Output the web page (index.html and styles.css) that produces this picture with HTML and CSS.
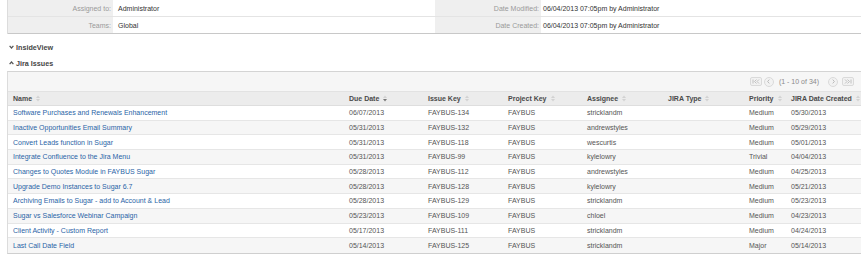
FILE: index.html
```html
<!DOCTYPE html>
<html>
<head>
<meta charset="utf-8">
<link rel="stylesheet" href="styles.css">
</head>
<body>
<div class="page">
  <div class="detail">
    <div class="drow">
      <div class="lbl">Assigned to:</div><div class="val">Administrator</div>
      <div class="lbl">Date Modified:</div><div class="val val2">06/04/2013 07:05pm by Administrator</div>
    </div>
    <div class="drow last">
      <div class="lbl">Teams:</div><div class="val">Global</div>
      <div class="lbl">Date Created:</div><div class="val val2">06/04/2013 07:05pm by Administrator</div>
    </div>
  </div>

  <div class="shead first"><svg class="chev" width="5" height="4" viewBox="0 0 5 4"><polyline points="0.6,0.8 2.5,3 4.4,0.8" fill="none" stroke="#555" stroke-width="1.2"/></svg>InsideView</div>
  <div class="shead"><svg class="chev" width="5" height="4" viewBox="0 0 5 4"><polyline points="0.6,3.2 2.5,1 4.4,3.2" fill="none" stroke="#555" stroke-width="1.2"/></svg>Jira Issues</div>

  <div class="jira">
    <div class="pager">
      <span class="pbtn sq"><svg width="8" height="5" viewBox="0 0 8 5"><path d="M1 0.5V4.5M4.5 0.5L2.5 2.5L4.5 4.5M7 0.5L5 2.5L7 4.5" fill="none" stroke="#bbb" stroke-width="0.9"/></svg></span>
      <span class="pbtn rd"><svg width="5" height="5" viewBox="0 0 5 5"><path d="M3.3 0.6L1.6 2.5L3.3 4.4" fill="none" stroke="#bbb" stroke-width="1"/></svg></span>
      <span class="ptext">(1 - 10 of 34)</span>
      <span class="pbtn rd next"><svg width="5" height="5" viewBox="0 0 5 5"><path d="M1.7 0.6L3.4 2.5L1.7 4.4" fill="none" stroke="#bbb" stroke-width="1"/></svg></span>
      <span class="pbtn sq"><svg width="8" height="5" viewBox="0 0 8 5"><path d="M7 0.5V4.5M3.5 0.5L5.5 2.5L3.5 4.5M1 0.5L3 2.5L1 4.5" fill="none" stroke="#bbb" stroke-width="0.9"/></svg></span>
    </div>

    <div class="trow thead">
      <div class="c">Name <svg class="sort" width="4" height="7" viewBox="0 0 4 7"><path d="M0 3L2 0.5L4 3Z" fill="#d2d2d2"/><path d="M0 4L2 6.5L4 4Z" fill="#d2d2d2"/></svg></div>
      <div class="c">Due Date <svg class="sort" width="4" height="7" viewBox="0 0 4 7"><path d="M0 3L2 0.5L4 3Z" fill="#d2d2d2"/><path d="M0 4L2 6.5L4 4Z" fill="#777"/></svg></div>
      <div class="c">Issue Key <svg class="sort" width="4" height="7" viewBox="0 0 4 7"><path d="M0 3L2 0.5L4 3Z" fill="#d2d2d2"/><path d="M0 4L2 6.5L4 4Z" fill="#d2d2d2"/></svg></div>
      <div class="c">Project Key <svg class="sort" width="4" height="7" viewBox="0 0 4 7"><path d="M0 3L2 0.5L4 3Z" fill="#d2d2d2"/><path d="M0 4L2 6.5L4 4Z" fill="#d2d2d2"/></svg></div>
      <div class="c">Assignee <svg class="sort" width="4" height="7" viewBox="0 0 4 7"><path d="M0 3L2 0.5L4 3Z" fill="#d2d2d2"/><path d="M0 4L2 6.5L4 4Z" fill="#d2d2d2"/></svg></div>
      <div class="c">JIRA Type <svg class="sort" width="4" height="7" viewBox="0 0 4 7"><path d="M0 3L2 0.5L4 3Z" fill="#d2d2d2"/><path d="M0 4L2 6.5L4 4Z" fill="#d2d2d2"/></svg></div>
      <div class="c">Priority <svg class="sort" width="4" height="7" viewBox="0 0 4 7"><path d="M0 3L2 0.5L4 3Z" fill="#d2d2d2"/><path d="M0 4L2 6.5L4 4Z" fill="#d2d2d2"/></svg></div>
      <div class="c">JIRA Date Created <svg class="sort" width="4" height="7" viewBox="0 0 4 7"><path d="M0 3L2 0.5L4 3Z" fill="#d2d2d2"/><path d="M0 4L2 6.5L4 4Z" fill="#d2d2d2"/></svg></div>
    </div>

    <div class="trow"><div class="c"><a>Software Purchases and Renewals Enhancement</a></div><div class="c">06/07/2013</div><div class="c">FAYBUS-134</div><div class="c">FAYBUS</div><div class="c">stricklandm</div><div class="c"></div><div class="c">Medium</div><div class="c">05/30/2013</div></div>
    <div class="trow alt"><div class="c"><a>Inactive Opportunities Email Summary</a></div><div class="c">05/31/2013</div><div class="c">FAYBUS-132</div><div class="c">FAYBUS</div><div class="c">andrewstyles</div><div class="c"></div><div class="c">Medium</div><div class="c">05/29/2013</div></div>
    <div class="trow"><div class="c"><a>Convert Leads function in Sugar</a></div><div class="c">05/31/2013</div><div class="c">FAYBUS-118</div><div class="c">FAYBUS</div><div class="c">wescurtis</div><div class="c"></div><div class="c">Medium</div><div class="c">05/01/2013</div></div>
    <div class="trow alt"><div class="c"><a>Integrate Confluence to the Jira Menu</a></div><div class="c">05/31/2013</div><div class="c">FAYBUS-99</div><div class="c">FAYBUS</div><div class="c">kylelowry</div><div class="c"></div><div class="c">Trivial</div><div class="c">04/04/2013</div></div>
    <div class="trow"><div class="c"><a>Changes to Quotes Module in FAYBUS Sugar</a></div><div class="c">05/28/2013</div><div class="c">FAYBUS-112</div><div class="c">FAYBUS</div><div class="c">andrewstyles</div><div class="c"></div><div class="c">Medium</div><div class="c">04/25/2013</div></div>
    <div class="trow alt"><div class="c"><a>Upgrade Demo Instances to Sugar 6.7</a></div><div class="c">05/28/2013</div><div class="c">FAYBUS-128</div><div class="c">FAYBUS</div><div class="c">kylelowry</div><div class="c"></div><div class="c">Medium</div><div class="c">05/21/2013</div></div>
    <div class="trow"><div class="c"><a>Archiving Emails to Sugar - add to Account &amp; Lead</a></div><div class="c">05/28/2013</div><div class="c">FAYBUS-129</div><div class="c">FAYBUS</div><div class="c">stricklandm</div><div class="c"></div><div class="c">Medium</div><div class="c">05/23/2013</div></div>
    <div class="trow alt"><div class="c"><a>Sugar vs Salesforce Webinar Campaign</a></div><div class="c">05/23/2013</div><div class="c">FAYBUS-109</div><div class="c">FAYBUS</div><div class="c">chloel</div><div class="c"></div><div class="c">Medium</div><div class="c">04/23/2013</div></div>
    <div class="trow"><div class="c"><a>Client Activity - Custom Report</a></div><div class="c">05/17/2013</div><div class="c">FAYBUS-111</div><div class="c">FAYBUS</div><div class="c">stricklandm</div><div class="c"></div><div class="c">Medium</div><div class="c">04/24/2013</div></div>
    <div class="trow alt lastrow"><div class="c"><a>Last Call Date Field</a></div><div class="c">05/14/2013</div><div class="c">FAYBUS-125</div><div class="c">FAYBUS</div><div class="c">stricklandm</div><div class="c"></div><div class="c">Major</div><div class="c">05/14/2013</div></div>
  </div>
</div>
</body>
</html>
```

FILE: styles.css
```css
html, body {
  margin: 0;
  padding: 0;
  background: #fff;
  overflow: hidden;
}
body {
  font-family: "Liberation Sans", Arial, sans-serif;
  font-size: 7px;
  color: #555;
}
.page {
  width: 861px;
  padding-left: 7px;
  box-sizing: border-box;
}
.detail {
  border-left: 1px solid #dcdcdc;
}
.drow {
  display: grid;
  grid-template-columns: 105px 322px 106px 1fr;
  height: 17px;
  box-sizing: border-box;
  border-bottom: 1px solid #e4e4e4;
}
.drow.last {
  border-bottom: 1px solid #c8c8c8;
}
.lbl {
  background: #efefef;
  color: #9a9a9a;
  text-align: right;
  padding-right: 2px;
  display: flex;
  align-items: center;
  justify-content: flex-end;
}
.val {
  color: #333;
  padding-left: 5px;
  display: flex;
  align-items: center;
}
.val2 {
  padding-left: 2px;
}
.shead {
  font-weight: bold;
  font-size: 7.2px;
  color: #454545;
  height: 16px;
  display: flex;
  align-items: center;
  gap: 2px;
  padding-left: 2px;
}
.shead.first {
  margin-top: 5px;
}
.chev {
  display: block;
}
.jira {
  margin-top: 0;
  border-left: 1px solid #dcdcdc;
  border-top: 1px solid #d4d4d4;
  border-bottom: 1px solid #cfcfcf;
}
.pager {
  height: 20px;
  box-sizing: border-box;
  background: #f6f6f6;
  border-bottom: 1px solid #e2e2e2;
  display: flex;
  align-items: center;
  justify-content: flex-end;
  padding-right: 7px;
  color: #888;
}
.pbtn {
  display: flex;
  align-items: center;
  justify-content: center;
  border: 1px solid #dadada;
  background: #f2f2f2;
  box-sizing: border-box;
}
.pbtn.sq {
  width: 12px;
  height: 9px;
  border-radius: 2px;
}
.pbtn.rd {
  width: 10px;
  height: 10px;
  border-radius: 50%;
  margin-left: 2px;
}
.ptext {
  margin-left: 5px;
  margin-right: 9px;
  color: #8a8a8a;
}
.pbtn.next {
  margin-left: 0;
  margin-right: 4px;
}
.trow {
  display: grid;
  grid-template-columns: 336px 79px 80px 79px 81px 81px 42px 1fr;
  height: 14.7px;
  box-sizing: border-box;
  border-bottom: 1px solid #e6e6e6;
  background: #fff;
}
.trow.alt {
  background: #f6f6f6;
}
.trow.lastrow {
  border-bottom: none;
}
.trow.thead {
  height: 14px;
  background: #ececec;
  border-bottom: 1px solid #dedede;
  font-weight: bold;
  color: #4a4a4a;
}
.c {
  padding-left: 5px;
  display: flex;
  align-items: center;
  white-space: nowrap;
  overflow: hidden;
}
.sort {
  margin-left: 4px;
  display: block;
}
a {
  color: #2a64a6;
  text-decoration: none;
}
```
